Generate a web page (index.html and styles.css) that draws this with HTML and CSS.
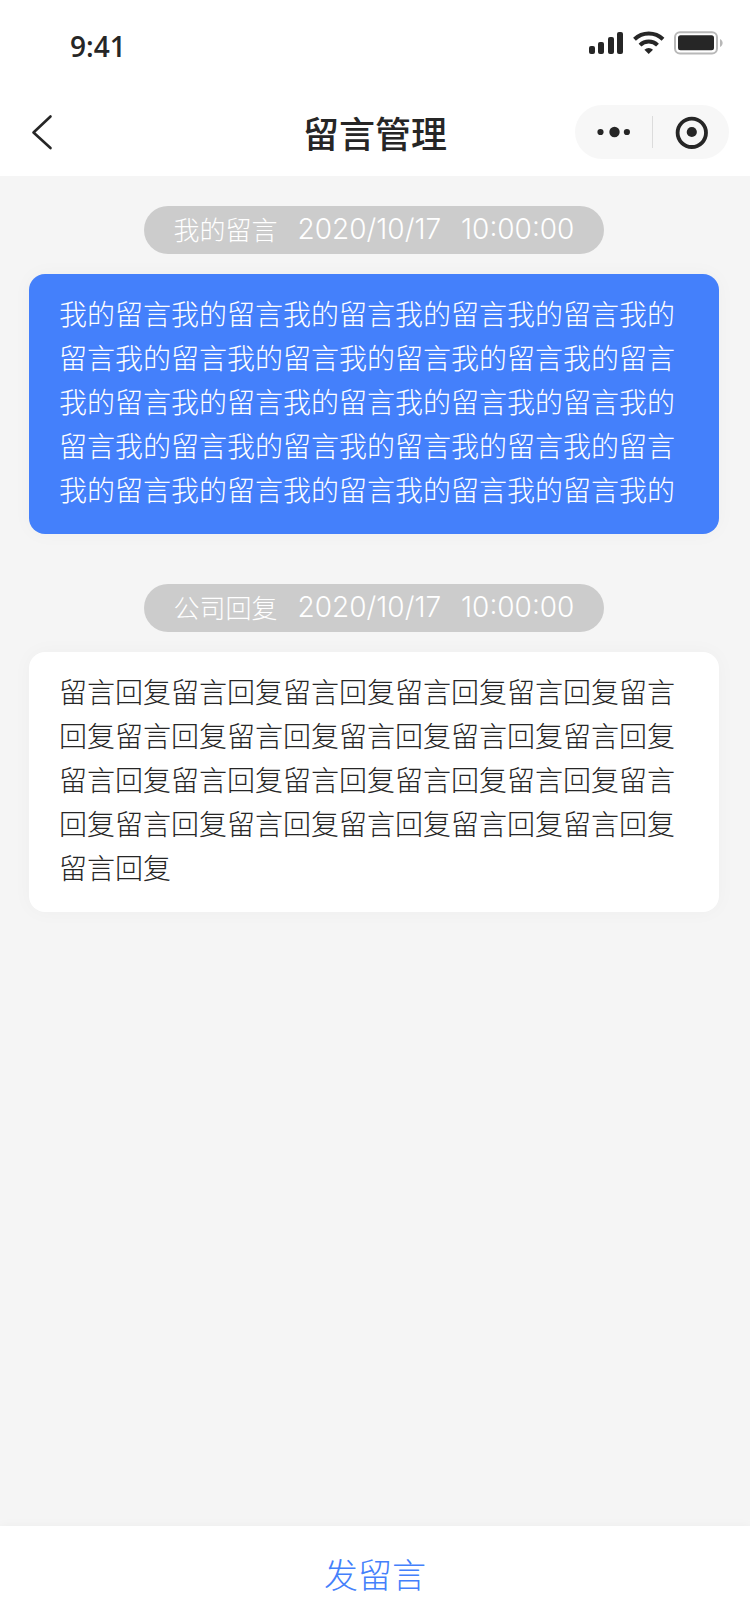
FILE: index.html
```html
<!DOCTYPE html>
<html lang="zh-CN">

<head>
  <meta charset="UTF-8">
  <meta name="viewport" content="width=device-width, initial-scale=1.0">
  <title>留言管理</title>
  <link rel="stylesheet" href="styles.css">
</head>

<body>
  <header class="header">
    <div class="status">
      <span class="time">9:41</span>
      <svg class="status-icons" width="136" height="26" viewBox="0 0 136 26">
        <!-- 信号 -->
        <g fill="#262626">
          <rect x="1" y="16" width="6" height="8" rx="2" />
          <rect x="10" y="12" width="6" height="12" rx="2" />
          <rect x="20" y="7" width="6" height="17" rx="2" />
          <rect x="29" y="2" width="6" height="22" rx="2" />
        </g>
        <!-- wifi -->
        <g fill="none" stroke="#262626" stroke-width="4">
          <path d="M46.500 9.300a20.500 20.500 0 0 1 28.500 0" />
          <path d="M52 15.100a12.500 12.500 0 0 1 17.500 0" />
        </g>
        <path d="M60.700 24l-4.300-4.300a6.500 6.500 0 0 1 8.600 0z" fill="#262626" />
        <!-- 电池 -->
        <rect x="87" y="2.200" width="42" height="21.200" rx="5" fill="none" stroke="#b8b8b8" stroke-width="2" />
        <rect x="90" y="5.300" width="36" height="15" rx="2.500" fill="#262626" />
        <path d="M132 9c3.500 1.500 3.500 6.500 0 8z" fill="#b8b8b8" />
      </svg>
    </div>
    <div class="nav">
      <button class="back" type="button" aria-label="返回">
        <svg width="22" height="36" viewBox="0 0 22 36">
          <path d="M19.500 2.500L2.500 18.500l17 15.500" fill="none" stroke="#262626" stroke-width="2.600" stroke-linecap="round" stroke-linejoin="round" />
        </svg>
      </button>
      <h1 class="title">留言管理</h1>
      <div class="capsule">
        <button type="button" aria-label="更多">
          <svg width="34" height="12" viewBox="0 0 34 12" fill="#262626">
            <circle cx="4.500" cy="6" r="3.100" />
            <circle cx="18.500" cy="6" r="5.200" />
            <circle cx="30.900" cy="6" r="3.100" />
          </svg>
        </button>
        <i class="line"></i>
        <button type="button" aria-label="关闭">
          <svg width="34" height="34" viewBox="0 0 34 34">
            <circle cx="17.800" cy="17.800" r="14.200" fill="none" stroke="#262626" stroke-width="3.800" />
            <circle cx="17.800" cy="17" r="5.100" fill="#262626" />
          </svg>
        </button>
      </div>
    </div>
  </header>

  <main class="content">
    <section class="message">
      <div class="label">
        <span>我的留言</span>
        <time>2020/10/17</time>
        <time>10:00:00</time>
      </div>
      <p class="card blue">我的留言我的留言我的留言我的留言我的留言我的留言我的留言我的留言我的留言我的留言我的留言我的留言我的留言我的留言我的留言我的留言我的留言我的留言我的留言我的留言我的留言我的留言我的留言我的留言我的留言我的留言我的留言我的</p>
    </section>
    <section class="message">
      <div class="label">
        <span>公司回复</span>
        <time>2020/10/17</time>
        <time>10:00:00</time>
      </div>
      <p class="card">留言回复留言回复留言回复留言回复留言回复留言回复留言回复留言回复留言回复留言回复留言回复留言回复留言回复留言回复留言回复留言回复留言回复留言回复留言回复留言回复留言回复留言回复留言回复</p>
    </section>
  </main>

  <footer class="footer">
    <button class="send" type="button">发留言</button>
  </footer>
</body>

</html>
```

FILE: styles.css
```css
* {
  box-sizing: border-box;
}
body {
  margin: 0;
  min-height: 100vh;
  display: flex;
  flex-direction: column;
  background: #f5f5f5;
  color: #262626;
  font-family: "Noto Sans CJK SC", sans-serif;
  font-weight: 300;
}
button {
  padding: 0;
  border: 0;
  background: none;
  color: inherit;
  font: inherit;
  cursor: pointer;
}
svg {
  display: block;
}

/* 顶部 */
.header {
  background: #fff;
}
.status {
  display: flex;
  justify-content: space-between;
  height: 88px;
  padding: 30px 26px 0 70px;
}
.time {
  font-family: "Open Sans", sans-serif;
  font-size: 28px;
  font-weight: 600;
  line-height: 32px;
}
.nav {
  display: grid;
  grid-template-columns: 1fr auto 1fr;
  align-items: center;
  height: 88px;
  padding: 0 21px;
}
.back {
  justify-self: start;
  padding-left: 10px;
}
.title {
  margin: 0;
  font-size: 36px;
  font-weight: 500;
  line-height: 54px;
}
.capsule {
  justify-self: end;
  display: flex;
  align-items: center;
  width: 154px;
  height: 54px;
  border-radius: 27px;
  background: #f7f7f7;
}
.capsule button {
  flex: 1;
  display: flex;
  justify-content: center;
}
.line {
  width: 1px;
  height: 32px;
  background: #dcdcdc;
}

/* 留言列表 */
.content {
  flex: 1;
  padding: 30px 31px 30px 29px;
}
.message {
  display: flex;
  flex-direction: column;
  align-items: center;
  gap: 20px;
  margin-bottom: 50px;
}
.label {
  display: flex;
  gap: 20px;
  padding: 0 30px 2px;
  border-radius: 24px;
  background: #ccc;
  color: #fff;
  font-size: 26px;
  line-height: 46px;
}
.label time {
  font-family: Inter, sans-serif;
  font-size: 28px;
}
.card {
  width: 100%;
  margin: 0;
  padding: 17px 30px 23px;
  border-radius: 16px;
  background: #fff;
  box-shadow: 0 0 20px rgba(0, 0, 0, 0.03);
  font-size: 28px;
  line-height: 44px;
}
.card.blue {
  background: #4480fb;
  color: #fff;
}

/* 底部 */
.footer {
  background: #fff;
  box-shadow: 0 0 10px rgba(0, 0, 0, 0.04);
}
.send {
  width: 100%;
  height: 98px;
  padding-bottom: 4px;
  color: #4480fb;
  font-size: 34px;
}
```
